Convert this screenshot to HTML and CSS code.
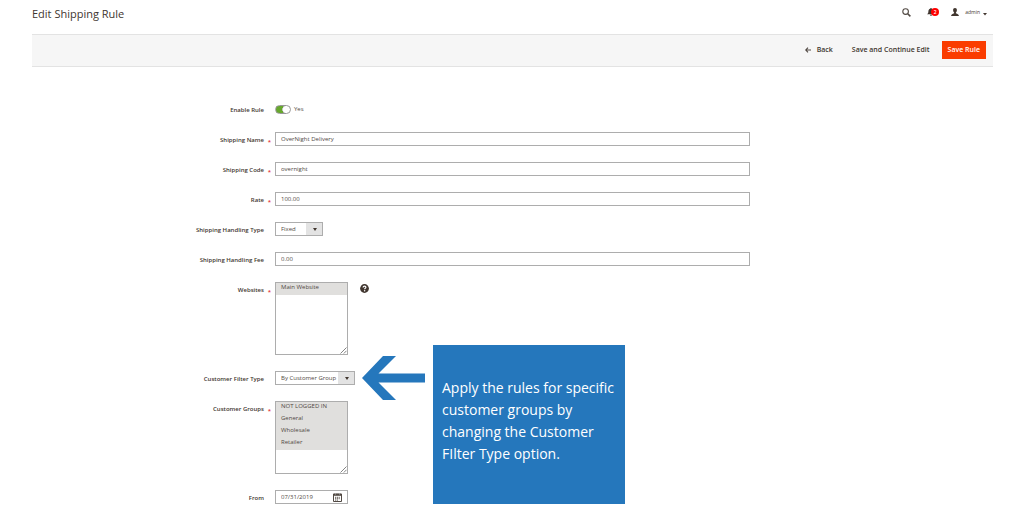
FILE: index.html
```html
<!DOCTYPE html>
<html lang="en">
<head>
  <meta charset="UTF-8">
  <meta name="viewport" content="width=device-width, initial-scale=1">
  <title>Edit Shipping Rule</title>
  <link rel="stylesheet" href="styles.css">
</head>
<body>

<header class="page-header">
  <h1 class="page-title">Edit Shipping Rule</h1>
  <div class="header-tools">
    <button class="tool" type="button" aria-label="Search">
      <svg width="9" height="9" viewBox="0 0 9 9" fill="none" stroke="#514943"><circle cx="3.6" cy="3.6" r="2.8" stroke-width="1.1"/><path d="M5.7 5.7L8.4 8.4" stroke-width="1.5"/></svg>
    </button>
    <button class="tool notifications" type="button" aria-label="Notifications">
      <svg width="8" height="8" viewBox="0 0 8 8" fill="#41362f"><path d="M4 0c-.6 0-.8.4-.8.7C2 1 1.4 2 1.4 3.2c0 1.600-.4 2.300-1.400 3.100h8C7 5.500 6.600 4.800 6.600 3.200 6.600 2 6 1 4.800.7 4.800.4 4.600 0 4 0zM3 6.800c0 .6.4 1 1 1s1-.4 1-1z"/></svg>
      <span class="badge">2</span>
    </button>
    <button class="tool account" type="button">
      <svg width="8" height="8" viewBox="0 0 8 8" fill="#41362f"><path d="M4 0C2.700 0 2.100.9 2.100 2.100c0 1 .4 1.900 1 2.400v.8C2.700 5.900.3 5.800 0 7.900h8c-.3-2.100-2.700-2-3.100-2.600v-.8c.6-.5 1-1.400 1-2.400C5.900.9 5.300 0 4 0z"/></svg>
      <span class="account-name">admin</span>
      <svg class="caret" width="4" height="3" viewBox="0 0 4 3" fill="#41362f"><path d="M0 0h4L2 2.600z"/></svg>
    </button>
  </div>
</header>

<div class="page-actions">
  <button class="action" type="button">
    <svg width="6" height="6" viewBox="0 0 6 6" fill="none" stroke="#514943" stroke-width="1.1"><path d="M6 3H.8M3 .6L.7 3 3 5.400"/></svg>
    Back
  </button>
  <button class="action" type="button">Save and Continue Edit</button>
  <button class="action action-primary" type="button">Save Rule</button>
</div>

<form class="rule-form">
  <div class="field">
    <label class="label" for="enable">Enable Rule</label>
    <div class="control">
      <input class="toggle" type="checkbox" id="enable" checked>
      <span class="toggle-text">Yes</span>
    </div>
  </div>

  <div class="field">
    <label class="label required" for="name">Shipping Name</label>
    <div class="control"><input class="text" type="text" id="name" value="OverNight Delivery"></div>
  </div>

  <div class="field">
    <label class="label required" for="code">Shipping Code</label>
    <div class="control"><input class="text" type="text" id="code" value="overnight"></div>
  </div>

  <div class="field">
    <label class="label required" for="rate">Rate</label>
    <div class="control"><input class="text" type="text" id="rate" value="100.00"></div>
  </div>

  <div class="field">
    <label class="label" for="handling-type">Shipping Handling Type</label>
    <div class="control">
      <div class="dropdown">
        <select class="select select-short" id="handling-type">
          <option>Fixed</option>
          <option>Percent</option>
        </select>
      </div>
    </div>
  </div>

  <div class="field">
    <label class="label" for="handling-fee">Shipping Handling Fee</label>
    <div class="control"><input class="text" type="text" id="handling-fee" value="0.00"></div>
  </div>

  <div class="field">
    <label class="label required" for="websites">Websites</label>
    <div class="control">
      <div class="listbox">
        <select class="multiselect" id="websites" multiple>
          <option selected>Main Website</option>
        </select>
        <svg class="grip" width="7" height="7" viewBox="0 0 7 7" stroke="#777" stroke-width=".9"><path d="M.5 6.500l6-6M3.800 6.500l2.700-2.700"/></svg>
      </div>
      <svg class="help" width="9" height="9" viewBox="0 0 9 9"><circle cx="4.5" cy="4.5" r="4.4" fill="#41362f"/><path d="M3.100 3.500c0-1 .6-1.400 1.400-1.400s1.400.5 1.400 1.200c0 1-1.300 1-1.300 2" fill="none" stroke="#fff" stroke-width="1.2"/><circle cx="4.6" cy="6.8" r=".75" fill="#fff"/></svg>
    </div>
  </div>

  <div class="field">
    <label class="label" for="filter-type">Customer Filter Type</label>
    <div class="control">
      <div class="dropdown">
        <select class="select select-long" id="filter-type">
          <option>By Customer Group</option>
          <option>By Customer</option>
        </select>
      </div>
      <div class="callout">
        <svg class="callout-arrow" width="63" height="44" viewBox="0 0 63 44" fill="#2577bc"><path d="M0 22L21 0h13L16.500 17.500H63v9H16.500L34 44H21z"/></svg>
        <p class="callout-text">Apply the rules for specific customer groups by changing the Customer FIlter Type option.</p>
      </div>
    </div>
  </div>

  <div class="field">
    <label class="label required" for="groups">Customer Groups</label>
    <div class="control">
      <div class="listbox">
        <select class="multiselect" id="groups" multiple>
          <option selected>NOT LOGGED IN</option>
          <option selected>General</option>
          <option selected>Wholesale</option>
          <option selected>Retailer</option>
        </select>
        <svg class="grip" width="7" height="7" viewBox="0 0 7 7" stroke="#777" stroke-width=".9"><path d="M.5 6.500l6-6M3.800 6.500l2.700-2.700"/></svg>
      </div>
    </div>
  </div>

  <div class="field">
    <label class="label" for="from">From</label>
    <div class="control">
      <div class="date">
        <input class="date-input" type="text" id="from" value="07/31/2019">
        <button class="date-button" type="button" aria-label="Select Date">
          <svg width="9" height="9" viewBox="0 0 9 9"><path d="M.5 1h8v7.500h-8z" fill="#fff" stroke="#514943"/><path d="M.5.8h8v2h-8z" fill="#514943"/><path d="M2 4.300h5M2 5.700h5M2 7.100h3" stroke="#514943" stroke-width=".9" stroke-dasharray="1.2 .6"/><path d="M2.500 0v1.500M6.500 0v1.500" stroke="#aaa"/></svg>
        </button>
      </div>
    </div>
  </div>
</form>

</body>
</html>
```
FILE: styles.css
```css
* {
  box-sizing: border-box;
}

body {
  margin: 0;
  padding: 0 31px 0 32px;
  background: #fff;
  color: #41362f;
  font-family: "Open Sans", "Noto Sans", sans-serif;
  font-size: 6px;
  line-height: 12px;
}

button,
input,
select {
  margin: 0;
  color: inherit;
  font: inherit;
}

button {
  padding: 0;
  border: 0;
  background: none;
  cursor: pointer;
}

svg {
  display: block;
  flex: none;
}

/* Header */
.page-header {
  display: flex;
  justify-content: space-between;
  padding: 4px 6px 10px 0;
}

.page-title {
  margin: 0;
  font-size: 11px;
  font-weight: 400;
  line-height: 20px;
}

.header-tools {
  display: flex;
  align-items: center;
  gap: 16px;
  height: 16px;
}

.tool {
  display: flex;
  align-items: center;
}

.notifications {
  position: relative;
}

.badge {
  position: absolute;
  top: 0;
  left: 4px;
  width: 8px;
  height: 8px;
  border-radius: 4px;
  background: #f00;
  color: #fff;
  font-size: 5px;
  font-weight: 600;
  line-height: 8px;
}

.account-name {
  margin: 0 3px 0 6px;
  font-size: 5px;
}

.caret {
  margin-top: 4px;
}

/* Action bar */
.page-actions {
  display: flex;
  justify-content: flex-end;
  align-items: center;
  gap: 19px;
  padding: 6px 7px 7px;
  border-top: 1px solid #e3e3e3;
  border-bottom: 1px solid #e3e3e3;
  background: #f6f6f6;
}

.action {
  display: flex;
  align-items: center;
  gap: 6px;
  height: 18px;
  font-size: 7px;
  font-weight: 600;
}

.action-primary {
  margin-left: -7px;
  padding: 0 6px;
  background: #fa3c00;
  color: #fff;
}

/* Form */
.rule-form {
  display: flex;
  flex-direction: column;
  gap: 16px;
  padding: 35px 0 8px;
}

.field {
  display: grid;
  grid-template-columns: 243fr 475fr 243fr;
}

.label {
  position: relative;
  padding: 2px 11px 0 0;
  font-weight: 600;
  text-align: right;
}

.required::after {
  content: "*";
  position: absolute;
  top: 4px;
  right: 4px;
  color: #e22626;
}

.control {
  position: relative;
  display: flex;
  align-items: flex-start;
  min-height: 14px;
  color: #514943;
}

.text,
.select,
.date {
  height: 14px;
  border: 1px solid #adadad;
  border-radius: 0;
  background: #fff;
}

.text {
  width: 100%;
  padding: 0 5px;
}

.toggle {
  appearance: none;
  align-self: center;
  width: 16px;
  height: 9px;
  border: 1px solid #999;
  border-radius: 5px;
  background: #fff;
}

.toggle:checked {
  background: radial-gradient(circle at 10px 50%, #fff 3px, #999 4px, #67a82d 4px) left / 10px 100% no-repeat, #fff;
}

.toggle-text {
  margin: 1px 0 0 3px;
}

/* Drop-downs */
.dropdown {
  position: relative;
}

.dropdown::after {
  content: "";
  position: absolute;
  top: 6px;
  right: 6px;
  border: 2px solid transparent;
  border-top: 3px solid #41362f;
  border-bottom: 0;
  pointer-events: none;
}

.select {
  display: block;
  appearance: none;
  padding: 0 16px 0 5px;
  background: linear-gradient(#e3e3e3, #e3e3e3) right / 16px 100% no-repeat;
}

.select-short {
  width: 48px;
}

.select-long {
  width: 80px;
}

/* Multiple choice lists */
.listbox {
  position: relative;
}

.multiselect {
  display: block;
  width: 73px;
  height: 73px;
  padding: 0;
  border: 1px solid #adadad;
  border-radius: 0;
  background: #fff;
  overflow: hidden;
}

.multiselect option {
  min-height: 12px;
  padding: 0 5px;
  line-height: 12px;
}

.multiselect option:checked {
  background: linear-gradient(#e0dfdd, #e0dfdd);
  color: #514943;
}

.grip {
  position: absolute;
  right: 1px;
  bottom: 1px;
}

.help {
  margin: 2px 0 0 12px;
}

.date {
  display: flex;
  align-items: center;
  width: 73px;
  padding-right: 5px;
}

.date-input {
  flex: 1;
  min-width: 0;
  height: 12px;
  padding: 0 5px;
  border: 0;
  background: none;
}

/* Hint over the form */
.callout {
  position: absolute;
  top: -26px;
  left: 87px;
  display: flex;
  align-items: flex-start;
  gap: 8px;
}

.callout-arrow {
  margin-top: 11px;
}

.callout-text {
  width: 192px;
  margin: 0;
  padding: 32px 6px 39px 9px;
  background: #2577bc;
  color: #fff;
  font-size: 14px;
  line-height: 22px;
}
```
